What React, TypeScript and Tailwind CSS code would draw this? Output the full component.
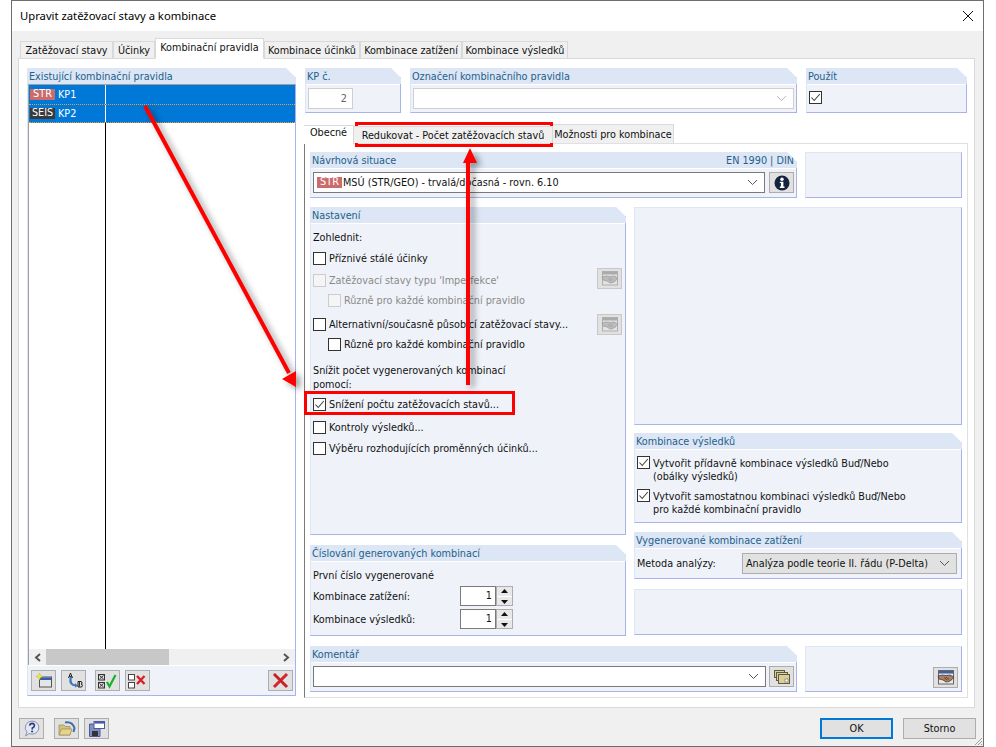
import type { ReactNode } from 'react';

const corner = '[clip-path:polygon(0_0,calc(100%-10px)_0,100%_10px,100%_100%,0_100%)]';

function Panel({ title, right, className, children }: { title: string; right?: string; className: string; children?: ReactNode }) {
  return (
    <div className={`flex flex-col bg-[#eff3f9] border-l border-l-[#dce6f4] border-r border-r-[#aab2ea] border-b border-b-[#aab2ea] ${corner} ${className}`}>
      <div className="h-[16px] shrink-0 -mr-px bg-[#dce6f4] flex items-center justify-between pl-[1px] pr-[2px] pt-[2px] text-[#24608c] leading-[14px]">
        <span>{title}</span>
        {right && <span className="pr-[1px]">{right}</span>}
      </div>
      <div className="h-px shrink-0 bg-white" />
      {children}
    </div>
  );
}

function Blank({ className, children }: { className: string; children?: ReactNode }) {
  return <div className={`bg-[#eff3f9] border border-[#dce6f4] border-r-[#aab2ea] border-b-[#aab2ea] ${className}`}>{children}</div>;
}

function Check({ checked, disabled }: { checked?: boolean; disabled?: boolean }) {
  return (
    <span className={`w-[13px] h-[13px] shrink-0 border flex items-center justify-center ${disabled ? 'border-[#cccccc] bg-[#f5f5f5]' : 'border-[#333333] bg-white'}`}>
      {checked && (
        <svg width="11" height="11" viewBox="0 0 11 11">
          <path d="M1.5 5.5 L4.2 8.5 L9.8 2" fill="none" stroke="#444" strokeWidth="1.1" />
        </svg>
      )}
    </span>
  );
}

function CheckRow({ label, checked, disabled, indent, className, children }: { label: string; checked?: boolean; disabled?: boolean; indent?: boolean; className: string; children?: ReactNode }) {
  return (
    <div className={`h-[14px] flex items-center gap-[3px] ${indent ? 'pl-[15px]' : ''} ${className}`}>
      <Check checked={checked} disabled={disabled} />
      <span className={`whitespace-nowrap translate-y-px ${disabled ? 'text-[#8a8a8a]' : ''}`}>{label}</span>
      {children}
    </div>
  );
}

function IconButton({ className, children }: { className?: string; children: ReactNode }) {
  return <div className={`w-[25px] h-[21px] shrink-0 bg-[#e1e1e1] border border-[#adadad] flex items-center justify-center ${className ?? ''}`}>{children}</div>;
}

function Chevron({ color = '#555' }: { color?: string }) {
  return (
    <svg width="11" height="7" viewBox="0 0 11 7">
      <path d="M1 1 L5.5 5.5 L10 1" fill="none" stroke={color} strokeWidth="1" />
    </svg>
  );
}

function Badge({ label, dark }: { label: string; dark?: boolean }) {
  return <span className={`w-[25px] h-[11px] shrink-0 flex items-center justify-center leading-none text-white ${dark ? 'bg-[#3a3a3a]' : 'bg-[#cb6c6c]'}`}>{label}</span>;
}

function Handshake({ muted }: { muted?: boolean }) {
  return (
    <svg width="18" height="15" viewBox="0 0 18 15" className={muted ? 'opacity-40 grayscale' : ''}>
      <rect x="1.5" y="0.5" width="15" height="13.5" fill="#e8e8e8" stroke="#666" />
      <rect x="2" y="1" width="14" height="2.5" fill="#3a5fb0" />
      <path d="M1 6 L5 5 L9 5.5 L13 5 L17 7 L15 9.5 L12 11.5 L9 12 L6 10 L2 9 Z" fill="#a87f62" stroke="#3a2c24" strokeWidth="0.7" />
      <path d="M7 7.5 L10 10 M9 7 L12 9.5" stroke="#3a2c24" strokeWidth="0.7" />
    </svg>
  );
}

function Spinner({ value }: { value: number }) {
  return (
    <div className="flex h-[20px] w-[53px] ml-auto mr-[112px]">
      <div className="w-[36px] bg-white border border-[#7a7a7a] text-right pr-[3px] leading-[18px]">{value}</div>
      <div className="w-[17px] border border-[#adadad] bg-[#e8e8e8] flex flex-col items-center justify-around">
        <svg width="7" height="4" viewBox="0 0 7 4"><path d="M3.5 0 L7 4 L0 4 Z" fill="#111" /></svg>
        <div className="h-px w-full bg-white" />
        <svg width="7" height="4" viewBox="0 0 7 4"><path d="M0 0 L7 0 L3.5 4 Z" fill="#111" /></svg>
      </div>
    </div>
  );
}

const tabs = ['Zatěžovací stavy', 'Účinky', 'Kombinační pravidla', 'Kombinace účinků', 'Kombinace zatížení', 'Kombinace výsledků'];
const tabWidths = ['w-[93px]', 'w-[42px]', 'w-[109px]', 'w-[96px]', 'w-[102px]', 'w-[106px]'];

export default function App() {
  return (
    <div className="relative w-[996px] h-[747px] bg-white overflow-hidden text-[10.75px] [font-stretch:condensed] text-[#111] font-['DejaVu_Sans','Liberation_Sans',sans-serif]">
      <div className="ml-[11px] w-[973px] h-[747px] border border-[#6e6e6e] bg-[#f0f0f0] flex flex-col">
        {/* Title */}
        <div className="h-[30px] shrink-0 bg-white flex items-center justify-between pl-[8px] pr-[9px]">
          <span className="text-[11.25px] [font-stretch:normal] text-black font-['Noto_Sans',sans-serif]">Upravit zatěžovací stavy a kombinace</span>
          <svg width="12" height="12" viewBox="0 0 12 12"><path d="M1 1 L11 11 M11 1 L1 11" stroke="#111" strokeWidth="1" /></svg>
        </div>

        {/* Tabs */}
        <div className="flex items-end h-[20px] mt-[7px] ml-[8px] shrink-0 relative z-10">
          {tabs.map((t, i) => (
            <div
              key={t}
              className={`${tabWidths[i]} flex items-center justify-center border border-[#d9d9d9] whitespace-nowrap ${i === 2 ? 'h-[21px] -mb-px bg-white border-b-white pb-[1px]' : 'h-[17px] bg-[#f0f0f0] border-b-0 pt-[2px]'}`}
            >
              {t}
            </div>
          ))}
        </div>

        {/* Main pane */}
        <div className="ml-[6px] w-[957px] h-[650px] shrink-0 bg-white border border-[#d9d9d9] flex gap-[9px] pl-[8px] pt-[9px]">
          {/* Rules list */}
          <Panel title="Existující kombinační pravidla" className="w-[269px] h-[628px]">
            <div className="flex-1 flex flex-col border-t border-t-[#a0a0a0] border-l border-l-[#a0a0a0] -mt-px bg-white">
              <div className="h-[19px] bg-[#0078d7] text-white flex items-center">
                <div className="w-[77px] h-full flex items-center gap-[3px] pl-[1px] border-r border-r-white">
                  <Badge label="STR" />
                  <span className="translate-y-px">KP1</span>
                </div>
              </div>
              <div className="h-[19px] bg-[#0078d7] text-white flex items-center border-y border-dotted border-[#f0a030]">
                <div className="w-[77px] h-full flex items-center gap-[3px] pl-[1px] border-r border-r-white">
                  <Badge label="SEIS" dark />
                  <span className="translate-y-px">KP2</span>
                </div>
              </div>
              <div className="flex-1">
                <div className="w-[77px] h-full border-r border-r-black" />
              </div>
              <div className="h-[16px] bg-[#f0f0f0] flex items-center">
                <div className="w-[17px] flex justify-center">
                  <svg width="7" height="9" viewBox="0 0 7 9"><path d="M6 1 L2 4.5 L6 8" fill="none" stroke="#555" strokeWidth="2" /></svg>
                </div>
                <div className="w-[123px] h-full bg-[#c8c8c8]" />
                <div className="flex-1 flex justify-end pr-[5px]">
                  <svg width="7" height="9" viewBox="0 0 7 9"><path d="M1 1 L5 4.5 L1 8" fill="none" stroke="#555" strokeWidth="2" /></svg>
                </div>
              </div>
            </div>
            <div className="h-[30px] shrink-0 border-t border-t-white flex items-center pl-[3px] pr-[2px]">
              <IconButton>
                <svg width="16" height="15" viewBox="0 0 16 15">
                  <rect x="3.5" y="4" width="12" height="10" fill="#e6e6e6" stroke="#555" />
                  <rect x="4" y="4.5" width="11" height="2.5" fill="#2f5fb8" />
                  <path d="M3.5 0 L4.5 2.5 L7 3.5 L4.5 4.5 L3.5 7 L2.5 4.5 L0 3.5 L2.5 2.5 Z" fill="#f5ea3a" stroke="#b5a520" strokeWidth="0.4" />
                </svg>
              </IconButton>
              <IconButton className="ml-[5px]">
                <svg width="18" height="17" viewBox="0 0 18 17">
                  <path d="M6 5 C4 11 7 13 11 13.5" fill="none" stroke="#3f78c0" strokeWidth="2.2" />
                  <path d="M10 11 L13 13.7 L10 15.5 Z" fill="#3f78c0" />
                  <path d="M3.5 6 L5.5 1 L7.5 6 M4.3 4.4 H6.7" fill="none" stroke="#222" strokeWidth="1" />
                  <path d="M13 9.5 H16 Q17 9.5 17 11 Q17 12 16 12 Q17.4 12 17.4 13.5 Q17.4 15 16 15 H13 Z M14.4 10 V14.6" fill="none" stroke="#222" strokeWidth="1" />
                </svg>
              </IconButton>
              <IconButton className="ml-[9px]">
                <svg width="19" height="16" viewBox="0 0 19 16">
                  <rect x="0.5" y="1.5" width="6" height="5.5" fill="#ddd" stroke="#333" />
                  <path d="M1.5 2.5 L5.5 6 M5.5 2.5 L1.5 6" stroke="#333" />
                  <rect x="0.5" y="9.5" width="6" height="5.5" fill="#ddd" stroke="#333" />
                  <path d="M1.5 10.5 L5.5 14 M5.5 10.5 L1.5 14" stroke="#333" />
                  <path d="M9 9 L11.5 13.5 L17.5 2" fill="none" stroke="#18b030" strokeWidth="2.2" />
                </svg>
              </IconButton>
              <IconButton className="ml-[5px]">
                <svg width="19" height="16" viewBox="0 0 19 16">
                  <rect x="0.5" y="1.5" width="6" height="5.5" fill="#fff" stroke="#444" />
                  <rect x="0.5" y="9.5" width="6" height="5.5" fill="#fff" stroke="#444" />
                  <path d="M9 3 L16.5 11 M16.5 3 L9 11" stroke="#d8202c" strokeWidth="2.4" />
                </svg>
              </IconButton>
              <IconButton className="ml-auto">
                <svg width="17" height="17" viewBox="0 0 17 17">
                  <path d="M2 2 L15 15 M15 2 L2 15" stroke="#d2252c" strokeWidth="3" />
                  <path d="M2 1.5 L15 14.5" stroke="#8a1a20" strokeWidth="0.6" />
                </svg>
              </IconButton>
            </div>
          </Panel>

          {/* Right column */}
          <div className="w-[662px] flex flex-col">
            <div className="flex gap-[9px] h-[45px]">
              <Panel title="KP č." className="w-[96px]">
                <div className="ml-[2px] mt-[3px] w-[45px] h-[21px] bg-white border border-[#cfcfcf] text-right pr-[5px] leading-[19px] text-[#666]">2</div>
              </Panel>
              <Panel title="Označení kombinačního pravidla" className="w-[387px]">
                <div className="mx-[2px] mt-[3px] h-[21px] bg-white border border-[#cfcfcf] flex items-center justify-end pr-[6px]">
                  <Chevron color="#bbb" />
                </div>
              </Panel>
              <Panel title="Použít" className="w-[161px]">
                <div className="ml-[2px] mt-[6px]"><Check checked /></div>
              </Panel>
            </div>

            {/* Inner tabs */}
            <div className="flex items-end h-[19px] mt-[11px] relative z-10 -ml-px">
              <div className="w-[50px] h-[19px] -mb-px bg-white border-t border-r border-[#d9d9d9] flex items-center justify-center pb-[3px]">Obecné</div>
              <div className="w-[199px] h-[17px] flex items-center justify-center bg-[#f0f0f0] border-t border-r border-[#d9d9d9] whitespace-nowrap pt-[2px]">Redukovat - Počet zatěžovacích stavů</div>
              <div className="w-[121px] h-[19px] flex items-center justify-center bg-[#f0f0f0] border-t border-r border-[#d9d9d9] whitespace-nowrap pt-[2px]">Možnosti pro kombinace</div>
            </div>

            {/* Inner pane */}
            <div className="-ml-px w-[664px] h-[555px] bg-white border border-[#e0e0e0] border-l-[#7a7a7a] pl-[5px] pt-[8px] flex flex-col">
              <div className="flex gap-[8px] h-[46px] shrink-0">
                <Panel title="Návrhová situace" right="EN 1990 | DIN" className="w-[487px]">
                  <div className="flex gap-[4px] mx-[2px] mt-[3px]">
                    <div className="flex-1 h-[21px] bg-white border border-[#7a7a7a] flex items-center gap-[1px] pl-[3px] pr-[6px]">
                      <Badge label="STR" />
                      <span className="translate-y-px">MSÚ (STR/GEO) - trvalá/dočasná - rovn. 6.10</span>
                      <span className="ml-auto"><Chevron /></span>
                    </div>
                    <IconButton>
                      <svg width="16" height="16" viewBox="0 0 16 16">
                        <circle cx="8" cy="8" r="7.5" fill="#14233f" />
                        <circle cx="8" cy="4.2" r="1.7" fill="#fff" />
                        <path d="M5.8 6.7 H9.4 V11.6 H10.5 V13 H5.8 V11.6 H6.9 V8.1 H5.8 Z" fill="#fff" />
                      </svg>
                    </IconButton>
                  </div>
                </Panel>
                <Blank className="w-[157px]" />
              </div>

              <div className="flex gap-[8px] mt-[9px] h-[429px] shrink-0">
                <div className="w-[316px] flex flex-col gap-[10px]">
                  <Panel title="Nastavení" className="h-[328px] shrink-0">
                    <div className="pl-[2px] pr-[3px] flex flex-col">
                      <div className="h-[14px] mt-[7px] flex items-center">Zohlednit:</div>
                      <CheckRow label="Příznivé stálé účinky" className="mt-[6px]" />
                      <CheckRow label="Zatěžovací stavy typu 'Imperfekce'" disabled className="mt-[8px]">
                        <IconButton className="ml-auto -translate-y-[2px] border-[#c8c8c8] bg-[#d8d8d8]"><Handshake muted /></IconButton>
                      </CheckRow>
                      <CheckRow label="Různě pro každé kombinační pravidlo" disabled indent className="mt-[6px]" />
                      <CheckRow label="Alternativní/současně působící zatěžovací stavy..." className="mt-[10px]">
                        <IconButton className="ml-auto border-[#c8c8c8] bg-[#d8d8d8]"><Handshake muted /></IconButton>
                      </CheckRow>
                      <CheckRow label="Různě pro každé kombinační pravidlo" indent className="mt-[6px]" />
                      <div className="mt-[13px] w-[215px] leading-[14px]">Snížit počet vygenerovaných kombinací pomocí:</div>
                      <CheckRow label="Snížení počtu zatěžovacích stavů..." checked className="mt-[5px]" />
                      <CheckRow label="Kontroly výsledků..." className="mt-[9px]" />
                      <CheckRow label="Výběru rozhodujících proměnných účinků..." className="mt-[7px]" />
                    </div>
                  </Panel>
                  <Panel title="Číslování generovaných kombinací" className="h-[91px] shrink-0">
                    <div className="pl-[2px] flex flex-col">
                      <div className="h-[14px] mt-[7px] leading-[14px]">První číslo vygenerované</div>
                      <div className="flex items-center mt-[3px] h-[20px]"><span className="translate-y-px">Kombinace zatížení:</span><Spinner value={1} /></div>
                      <div className="flex items-center mt-[3px] h-[20px]"><span className="translate-y-px">Kombinace výsledků:</span><Spinner value={1} /></div>
                    </div>
                  </Panel>
                </div>
                <div className="w-[328px] flex flex-col">
                  <Blank className="h-[218px] shrink-0" />
                  <Panel title="Kombinace výsledků" className="h-[90px] shrink-0 mt-[8px]">
                    <div className="pl-[2px] flex flex-col leading-[13px]">
                      <div className="flex gap-[3px] mt-[6px]">
                        <Check checked />
                        <span className="translate-y-px">Vytvořit přídavně kombinace výsledků Buď/Nebo<br />(obálky výsledků)</span>
                      </div>
                      <div className="flex gap-[3px] mt-[7px]">
                        <Check checked />
                        <span className="translate-y-px">Vytvořit samostatnou kombinaci výsledků Buď/Nebo<br />pro každé kombinační pravidlo</span>
                      </div>
                    </div>
                  </Panel>
                  <Panel title="Vygenerované kombinace zatížení" className="h-[47px] shrink-0 mt-[9px]">
                    <div className="flex items-center mt-[4px] pl-[2px] pr-[4px] justify-between">
                      <span className="translate-y-px">Metoda analýzy:</span>
                      <div className="w-[215px] h-[21px] bg-[#e1e1e1] border border-[#adadad] flex items-center justify-between pl-[3px] pr-[6px] whitespace-nowrap">
                        <span className="translate-y-px">Analýza podle teorie II. řádu (P-Delta)</span>
                        <Chevron />
                      </div>
                    </div>
                  </Panel>
                  <Blank className="h-[46px] shrink-0 mt-[10px]" />
                </div>
              </div>

              <div className="flex gap-[8px] mt-[10px] h-[46px] shrink-0">
                <Panel title="Komentář" className="w-[487px]">
                  <div className="flex gap-[3px] mx-[2px] mt-[3px]">
                    <div className="flex-1 h-[21px] bg-white border border-[#7a7a7a] flex items-center justify-end pr-[6px]">
                      <Chevron />
                    </div>
                    <IconButton>
                      <svg width="16" height="14" viewBox="0 0 16 14">
                        <rect x="0.5" y="0.5" width="10" height="7" fill="#d9cf9a" stroke="#5c5a40" />
                        <rect x="2.5" y="2.5" width="11" height="8" fill="#d9cf9a" stroke="#5c5a40" />
                        <rect x="4.5" y="4.5" width="11" height="9" fill="#d9cf9a" stroke="#5c5a40" />
                        <rect x="11" y="9" width="3" height="3" fill="#fff" stroke="#5c5a40" strokeWidth="0.5" />
                      </svg>
                    </IconButton>
                  </div>
                </Panel>
                <Blank className="w-[157px] flex items-end justify-end pr-[3px] pb-[3px]">
                  <IconButton><Handshake /></IconButton>
                </Blank>
              </div>
            </div>
          </div>
        </div>

        {/* Footer */}
        <div className="flex items-start mt-[10px] ml-[7px] mr-[7px]">
          <div className="w-[25px] h-[21px] bg-[#e1e1e1] border border-[#adadad] flex items-center justify-center">
            <svg width="16" height="17" viewBox="0 0 16 17">
              <path d="M8 1 A7 6.6 0 1 1 5 13.6 L1.5 16 L3 12 A7 6.6 0 0 1 8 1 Z" fill="#e4e8f2" stroke="#8a94b0" />
              <path d="M5.6 5.6 Q6 3.4 8.2 3.4 Q10.6 3.6 10.4 5.6 Q10.2 7 8.4 8 L8.2 9.5" fill="none" stroke="#2c3f86" strokeWidth="1.7" />
              <circle cx="8.1" cy="11.5" r="1.1" fill="#2c3f86" />
            </svg>
          </div>
          <div className="w-[25px] h-[21px] ml-[10px] bg-[#e1e1e1] border border-[#adadad] flex items-center justify-center">
            <svg width="18" height="15" viewBox="0 0 18 15">
              <path d="M1 4 H6 L7.5 5.5 H12 V14 H1 Z" fill="#d4c27c" stroke="#9a8a50" strokeWidth="0.7" />
              <path d="M1 14 L3.5 8 H14 L12 14 Z" fill="#e3d48e" stroke="#9a8a50" strokeWidth="0.7" />
              <path d="M7 1.5 Q14 0 16.5 7 L15.5 11" fill="none" stroke="#3f6fa8" strokeWidth="2" />
            </svg>
          </div>
          <div className="w-[25px] h-[21px] ml-[5px] bg-[#e1e1e1] border border-[#adadad] flex items-center justify-center">
            <svg width="16" height="16" viewBox="0 0 16 16">
              <path d="M0.5 3 H11 V15.5 H0.5 Z" fill="#7f8fc8" stroke="#4d5a94" />
              <rect x="3" y="10" width="6" height="5" fill="#333" />
              <rect x="5" y="0.5" width="10.5" height="7" fill="#fff" stroke="#4d5a94" />
              <rect x="5.5" y="1" width="9.5" height="1.6" fill="#3f5fb0" />
            </svg>
          </div>
          <div className="ml-auto w-[73px] h-[21px] bg-[#e1e1e1] border-2 border-[#0078d7] flex items-center justify-center pt-[1px]">OK</div>
          <div className="ml-[10px] w-[73px] h-[21px] bg-[#e1e1e1] border border-[#adadad] flex items-center justify-center pt-[2px]">Storno</div>
        </div>
      </div>

      {/* Red annotations over the dialog */}
      <div className="absolute left-[355px] top-[122px] w-[198px] h-[25px] border-[3px] border-[#ff0000]" />
      <div className="absolute left-[304px] top-[391px] w-[211px] h-[24px] border-[3px] border-[#ff0000]" />
      <svg className="absolute left-0 top-0 pointer-events-none drop-shadow-[4px_3px_3px_rgba(0,0,0,0.4)]" width="996" height="747" viewBox="0 0 996 747">
        <path d="M145 106 L289 373" stroke="#ff0000" strokeWidth="4" fill="none" />
        <path d="M296 387 L282 379 L296 371 Z" fill="#ff0000" />
        <path d="M468 385 L468 158" stroke="#ff0000" strokeWidth="4" fill="none" />
        <path d="M470 148 L477 163 L463 163 Z" fill="#ff0000" />
      </svg>

      {/* Resize grip */}
      <svg className="absolute left-[974px] top-[737px]" width="9" height="9" viewBox="0 0 9 9">
        <path d="M8 1 L1 8 M8 4 L4 8 M8 7 L7 8" stroke="#a0a0a0" strokeWidth="1" />
      </svg>
    </div>
  );
}
